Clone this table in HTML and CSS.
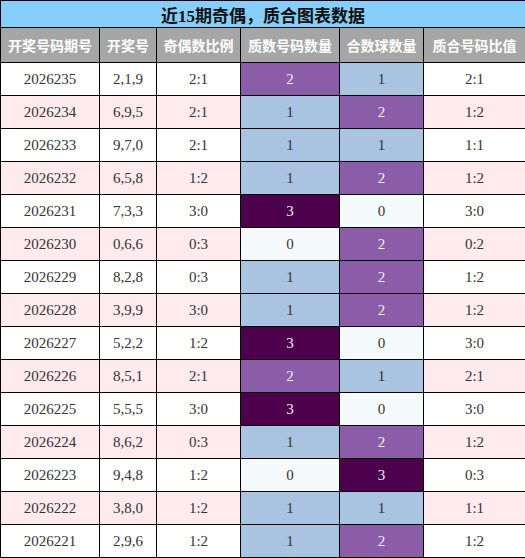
FILE: index.html
```html
<!DOCTYPE html>
<html lang="zh-CN">

<head>
    <meta charset="UTF-8">
    <title>近15期奇偶，质合图表数据</title>
    <link rel="stylesheet" href="styles.css">
</head>

<body>
    <table class="chart">
        <colgroup>
            <col class="c-issue">
            <col class="c-nums">
            <col class="c-odd">
            <col class="c-prime">
            <col class="c-comp">
            <col class="c-ratio">
        </colgroup>
        <thead>
            <tr class="title-row">
                <th colspan="6">近15期奇偶，质合图表数据</th>
            </tr>
            <tr class="head-row">
                <th>开奖号码期号</th>
                <th>开奖号</th>
                <th>奇偶数比例</th>
                <th>质数号码数量</th>
                <th>合数球数量</th>
                <th>质合号码比值</th>
            </tr>
        </thead>
        <tbody>
            <tr><td>2026235</td><td>2,1,9</td><td>2:1</td><td class="v2">2</td><td class="v1">1</td><td>2:1</td></tr>
            <tr><td>2026234</td><td>6,9,5</td><td>2:1</td><td class="v1">1</td><td class="v2">2</td><td>1:2</td></tr>
            <tr><td>2026233</td><td>9,7,0</td><td>2:1</td><td class="v1">1</td><td class="v1">1</td><td>1:1</td></tr>
            <tr><td>2026232</td><td>6,5,8</td><td>1:2</td><td class="v1">1</td><td class="v2">2</td><td>1:2</td></tr>
            <tr><td>2026231</td><td>7,3,3</td><td>3:0</td><td class="v3">3</td><td class="v0">0</td><td>3:0</td></tr>
            <tr><td>2026230</td><td>0,6,6</td><td>0:3</td><td class="v0">0</td><td class="v2">2</td><td>0:2</td></tr>
            <tr><td>2026229</td><td>8,2,8</td><td>0:3</td><td class="v1">1</td><td class="v2">2</td><td>1:2</td></tr>
            <tr><td>2026228</td><td>3,9,9</td><td>3:0</td><td class="v1">1</td><td class="v2">2</td><td>1:2</td></tr>
            <tr><td>2026227</td><td>5,2,2</td><td>1:2</td><td class="v3">3</td><td class="v0">0</td><td>3:0</td></tr>
            <tr><td>2026226</td><td>8,5,1</td><td>2:1</td><td class="v2">2</td><td class="v1">1</td><td>2:1</td></tr>
            <tr><td>2026225</td><td>5,5,5</td><td>3:0</td><td class="v3">3</td><td class="v0">0</td><td>3:0</td></tr>
            <tr><td>2026224</td><td>8,6,2</td><td>0:3</td><td class="v1">1</td><td class="v2">2</td><td>1:2</td></tr>
            <tr><td>2026223</td><td>9,4,8</td><td>1:2</td><td class="v0">0</td><td class="v3">3</td><td>0:3</td></tr>
            <tr><td>2026222</td><td>3,8,0</td><td>1:2</td><td class="v1">1</td><td class="v1">1</td><td>1:1</td></tr>
            <tr><td>2026221</td><td>2,9,6</td><td>1:2</td><td class="v1">1</td><td class="v2">2</td><td>1:2</td></tr>
        </tbody>
    </table>
</body>

</html>
```

FILE: styles.css
```css
body {
    margin: 0;
    padding: 0;
    background-color: #ffffff;
    font-family: "Liberation Serif", "Noto Sans CJK SC", serif;
}

.chart {
    width: 525px;
    table-layout: fixed;
    border-collapse: collapse;
    color: #333333;
}

.c-issue { width: 99px; }
.c-nums { width: 57px; }
.c-odd { width: 84px; }
.c-prime { width: 99px; }
.c-comp { width: 84px; }
.c-ratio { width: 102px; }

.chart th,
.chart td {
    border: 1px solid #000000;
    padding: 0;
    text-align: center;
}

.title-row th {
    height: 26px;
    background-color: #87cefa;
    color: #111111;
    font-family: "Liberation Serif", "Noto Sans CJK SC", sans-serif;
    font-size: 17px;
    font-weight: bold;
}

.head-row th {
    height: 34px;
    background-color: #a6a6a6;
    color: #ffffff;
    font-family: "Noto Sans CJK SC", sans-serif;
    font-size: 14px;
    font-weight: bold;
}

.chart td {
    height: 32px;
    font-size: 15px;
}

tbody tr:nth-child(even) td {
    background-color: #ffebee;
}

/* number-count colour scale */
.chart td.v0 {
    background-color: #f5fbfc;
}

.chart td.v1 {
    background-color: #a8c4e0;
}

.chart td.v2 {
    background-color: #8b5ca8;
    color: #f0f0f0;
}

.chart td.v3 {
    background-color: #4d004b;
    color: #f0f0f0;
}
```
